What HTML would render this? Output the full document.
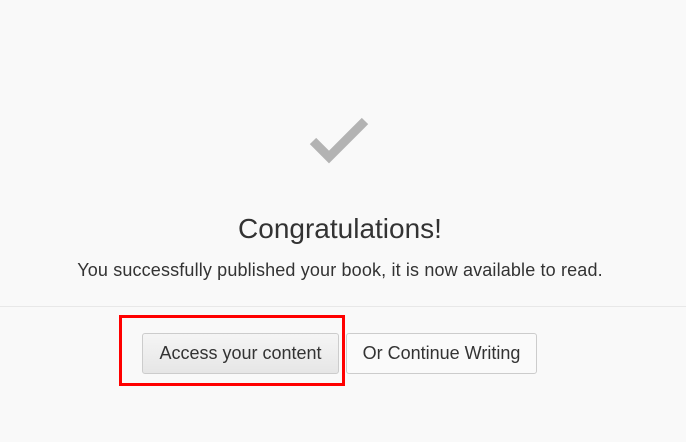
<!DOCTYPE html>
<html><head><style>
html,body{margin:0;padding:0;width:686px;height:442px;background:#f9f9f9;overflow:hidden;font-family:"Liberation Sans",Arial,sans-serif;color:#333;position:relative}
.t{position:absolute;left:0;width:686px;text-align:center;white-space:nowrap}
.hr{position:absolute;left:0;top:306px;width:686px;height:1px;background:#e8e8e8}
.btn{position:absolute;top:333px;height:41px;box-sizing:border-box;border:1px solid #ccc;border-radius:3px;font-size:18px;line-height:39px;text-align:center;color:#333}
.red{position:absolute;left:119px;top:315px;width:226px;height:71px;box-sizing:border-box;border:3px solid #f00}
</style></head><body>
<svg style="position:absolute;left:0;top:0" width="686" height="442"><polyline points="313,141 329,157 365,121" fill="none" stroke="#b3b3b3" stroke-width="9"/></svg>
<div class="t" style="top:212px;font-size:28px;line-height:34px;left:-3px">Congratulations!</div>
<div class="t" style="top:259px;font-size:18px;line-height:22px;left:-3px;letter-spacing:0.15px">You successfully published your book, it is now available to read.</div>
<div class="hr"></div>
<div class="btn" style="left:142px;width:197px;background:linear-gradient(#f5f5f5,#e6e6e6)">Access your content</div>
<div class="btn" style="left:346px;width:191px;background:#fafafa">Or Continue Writing</div>
<div class="red"></div>
</body></html>
